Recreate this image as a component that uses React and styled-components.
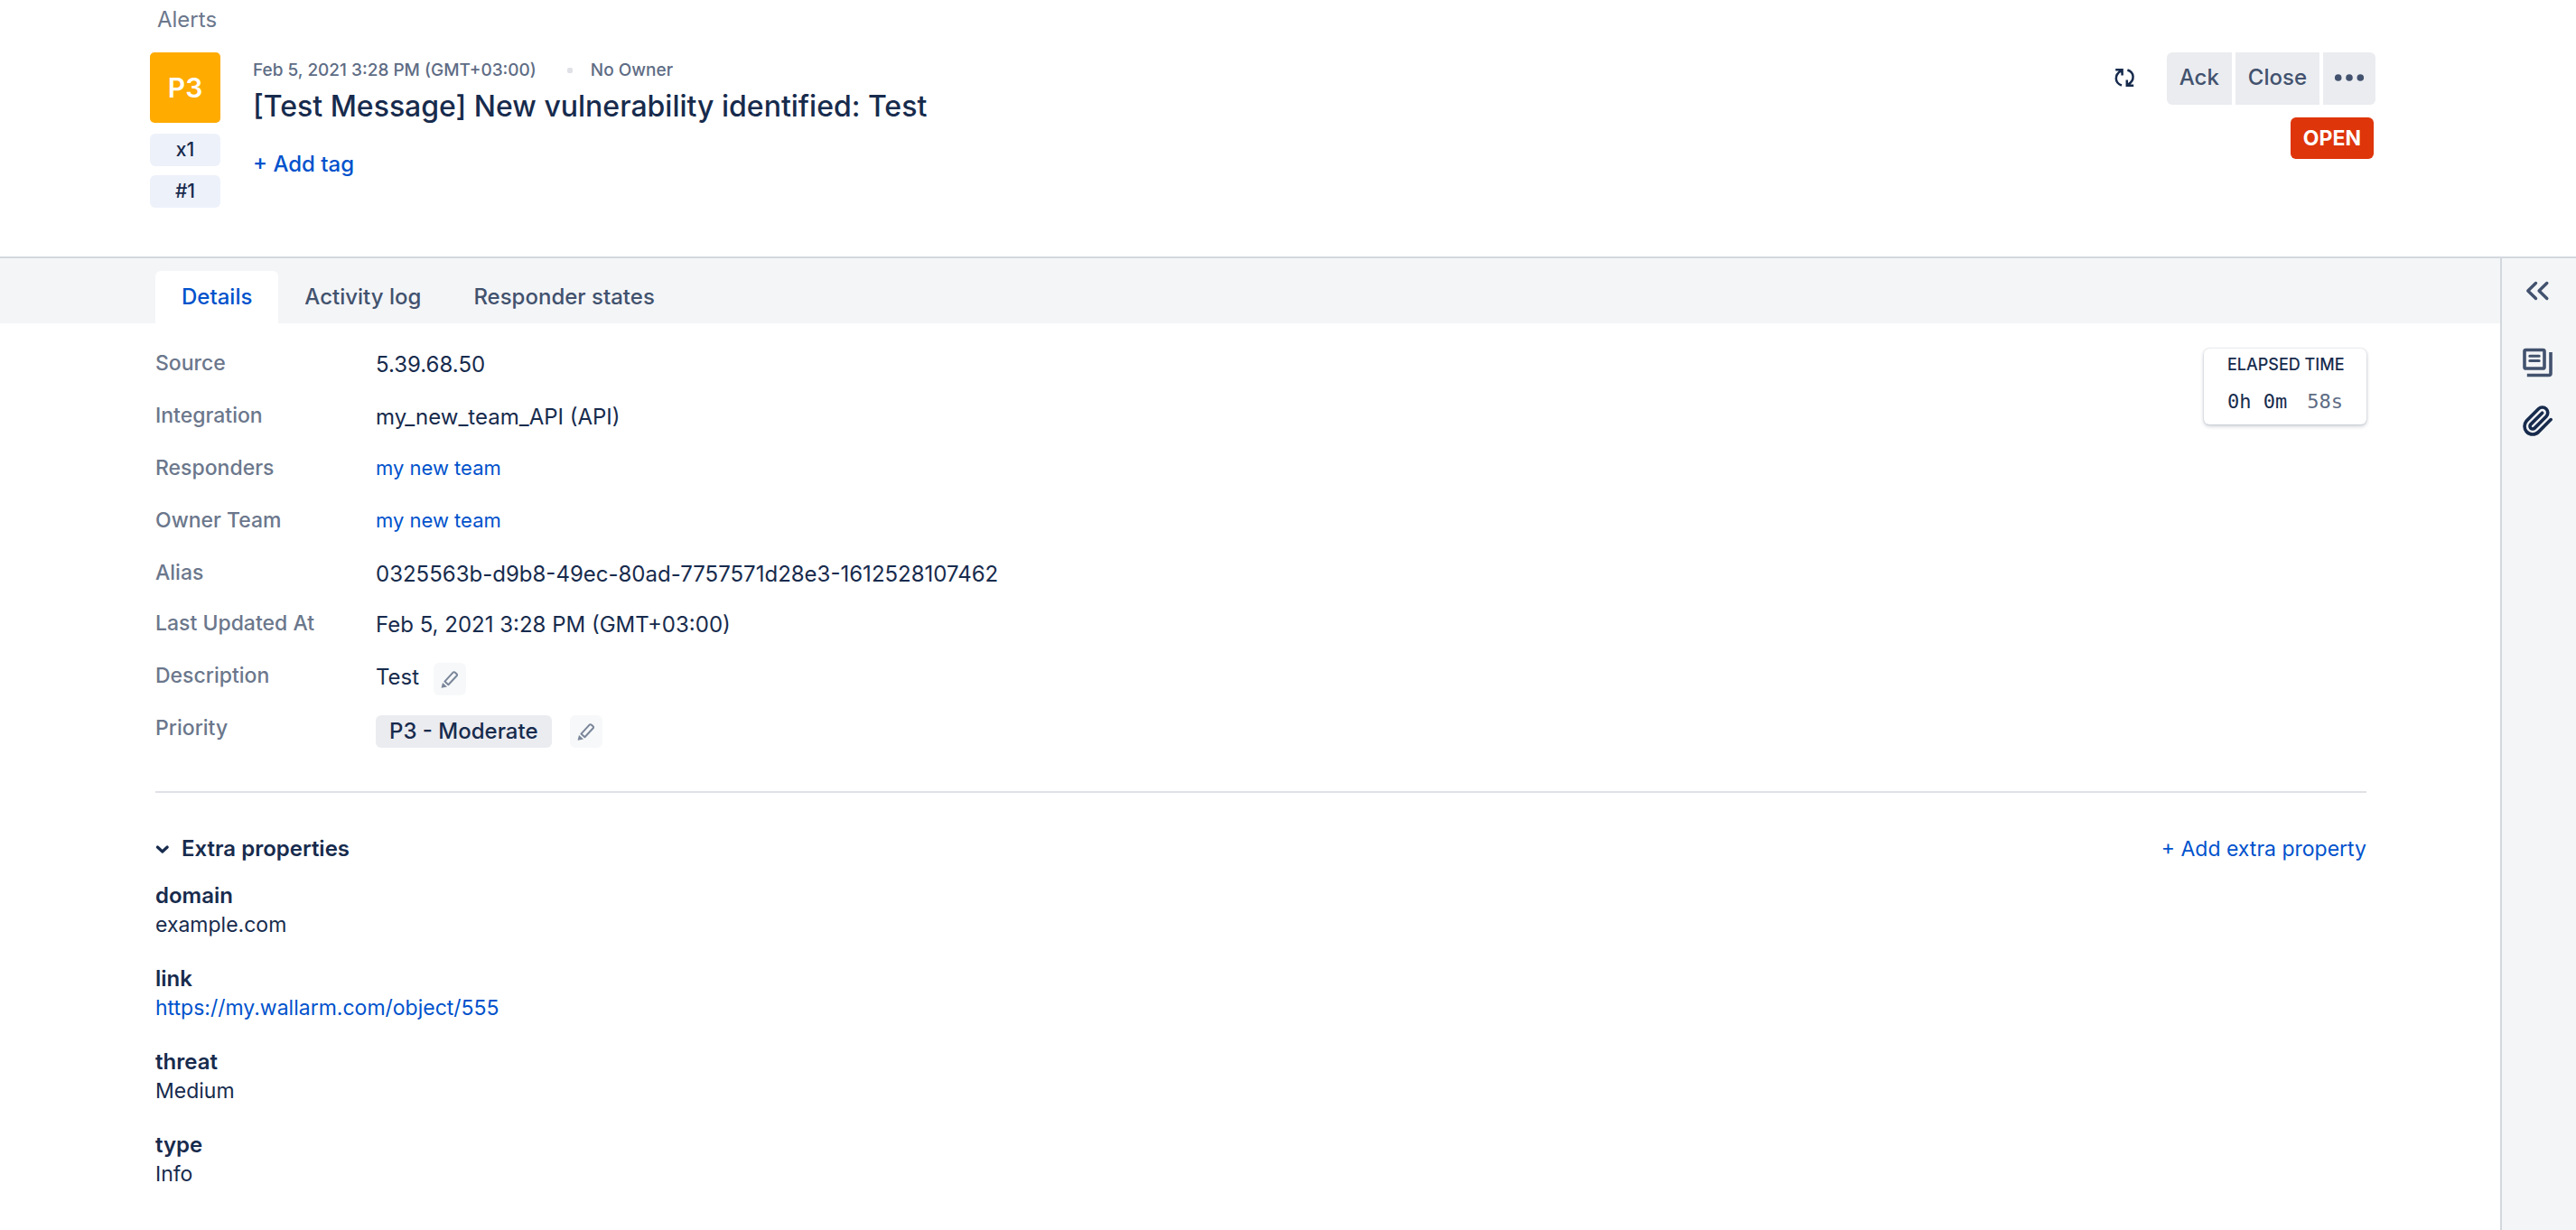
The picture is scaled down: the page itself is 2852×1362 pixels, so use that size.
import React from "react";
import styled, { createGlobalStyle, css } from "styled-components";

const color = {
  text: "#172b4d",
  subtle: "#42526e",
  meta: "#5e6c84",
  label: "#6b778c",
  link: "#0052cc",
  surface: "#f4f5f7",
  neutral: "#ebecf0",
  line: "#d3d8de",
  divider: "#dfe1e6",
  badge: "#edf1fa",
  amber: "#ffab00",
  red: "#de350b",
};

const GlobalStyle = createGlobalStyle`
  *, *::before, *::after { box-sizing: border-box; }
  body {
    margin: 0;
    background: #fff;
    color: ${color.text};
    font-family: Inter, "Liberation Sans", sans-serif;
    font-size: 24px;
    line-height: 32px;
  }
  h1, h2, dl, dd { margin: 0; }
  svg { display: block; }
`;

const Page = styled.div`
  display: flex;
  flex-direction: column;
  min-height: 100vh;
`;

const buttonReset = css`
  margin: 0;
  padding: 0;
  border: 0;
  background: none;
  color: inherit;
  font: inherit;
  cursor: pointer;
`;

/* ---------- Header ---------- */

const Header = styled.header`
  padding: 6px 222px 54px 166px;
  border-bottom: 2px solid ${color.line};
`;

const Breadcrumb = styled.a`
  display: block;
  width: max-content;
  margin: 0 0 20px 8px;
  color: ${color.label};
  text-decoration: none;
`;

const HeaderRow = styled.div`
  display: flex;
  align-items: flex-start;
  gap: 36px;
`;

const Badges = styled.div`
  display: flex;
  flex-direction: column;
  flex: none;
  gap: 10px;
  width: 78px;
`;

const PriorityBadge = styled.div`
  display: grid;
  place-items: center;
  height: 78px;
  margin-bottom: 2px;
  border-radius: 5px;
  background: ${color.amber};
  color: #fff;
  font-size: 30px;
  font-weight: 600;
`;

const CountBadge = styled.div`
  display: grid;
  place-items: center;
  height: 36px;
  border-radius: 6px;
  background: ${color.badge};
  font-size: 21px;
  font-weight: 500;
`;

const Summary = styled.div`
  flex: 1;
  padding-top: 6px;
`;

const Meta = styled.div`
  display: flex;
  align-items: center;
  color: ${color.meta};
  font-size: 19px;
  font-weight: 500;
  line-height: 28px;
`;

const Dot = styled.span`
  width: 6px;
  height: 6px;
  margin: 0 20px 0 34px;
  border-radius: 2px;
  background: ${color.divider};
`;

const Title = styled.h1`
  margin: 6px 0 28px;
  font-size: 32px;
  font-weight: 500;
  line-height: 40px;
`;

const TextButton = styled.button`
  ${buttonReset}
  display: block;
  color: ${color.link};
  font-size: ${(p) => (p.$strong ? "24px" : "23px")};
  font-weight: ${(p) => (p.$strong ? 500 : 400)};
`;

const HeaderSide = styled.div`
  display: flex;
  flex-direction: column;
  align-items: flex-end;
  gap: 14px;
`;

const Actions = styled.div`
  display: flex;
  align-items: center;
  gap: 18px;
`;

const ButtonGroup = styled.div`
  display: flex;
  gap: 4px;
  border-radius: 6px;
  overflow: hidden;
`;

const ActionButton = styled.button`
  ${buttonReset}
  height: 58px;
  padding: 0 14px 2px;
  background: ${color.neutral};
  color: ${color.subtle};
  font-weight: 500;
`;

const IconButton = styled.button`
  ${buttonReset}
  display: grid;
  place-items: center;
  width: 58px;
  height: 58px;
  padding-bottom: 2px;
  background: ${(p) => (p.$filled ? color.neutral : "none")};
  color: ${(p) => (p.$filled ? color.subtle : color.text)};
`;

const Status = styled.span`
  margin-right: 2px;
  padding: 7px 14px;
  border-radius: 6px;
  background: ${color.red};
  color: #fff;
  font-size: 23px;
  font-weight: 700;
`;

/* ---------- Body ---------- */

const Body = styled.div`
  display: flex;
  flex: 1;
`;

const Main = styled.main`
  flex: 1;
  min-width: 0;
`;

const Tabs = styled.div`
  display: flex;
  padding: 14px 172px 0;
  background: ${color.surface};
`;

const Tab = styled.button`
  ${buttonReset}
  height: 58px;
  padding: 0 29px;
  border-radius: 6px 6px 0 0;
  background: ${(p) => (p["aria-selected"] ? "#fff" : "none")};
  color: ${(p) => (p["aria-selected"] ? color.link : color.subtle)};
  font-weight: 500;
`;

const Panel = styled.div`
  padding: 28px 148px 24px 172px;
`;

const Overview = styled.section`
  display: flex;
  justify-content: space-between;
  align-items: flex-start;
  padding-bottom: 28px;
  border-bottom: 2px solid ${color.divider};
`;

const Fields = styled.dl`
  flex: 1;
`;

const Field = styled.div`
  display: grid;
  grid-template-columns: 244px 1fr;
  align-items: start;
  height: ${(p) => (p.$tight ? "56px" : "58px")};
`;

const FieldName = styled.dt`
  color: ${color.label};
  font-size: 23px;
  font-weight: 500;
`;

const FieldValue = styled.dd`
  display: flex;
  align-items: flex-start;
  gap: ${(p) => p.$gap || "16px"};
  padding-top: 2px;
`;

const TeamLink = styled.a`
  color: ${color.link};
  font-size: 22px;
  line-height: 28px;
  text-decoration: none;
`;

const Lozenge = styled.span`
  padding: 2px 15px;
  border-radius: 6px;
  background: ${color.neutral};
  font-weight: 500;
`;

const EditButton = styled.button`
  ${buttonReset}
  display: grid;
  place-items: center;
  width: 36px;
  height: 36px;
  border-radius: 6px;
  background: #f7f8f9;
  color: #7a869a;
`;

const Elapsed = styled.aside`
  width: 180px;
  padding: 6px 0 9px 26px;
  border-radius: 6px;
  box-shadow: 0 2px 4px rgba(9, 30, 66, 0.22), 0 0 2px rgba(9, 30, 66, 0.2);
`;

const ElapsedTitle = styled.div`
  margin-bottom: 13px;
  font-size: 18px;
  font-weight: 500;
  line-height: 24px;
`;

const ElapsedTime = styled.div`
  display: flex;
  gap: 22px;
  font-family: "DejaVu Sans Mono", "Liberation Mono", monospace;
  font-size: 22px;
`;

const Seconds = styled.span`
  color: ${color.meta};
`;

const SectionHead = styled.div`
  display: flex;
  justify-content: space-between;
  margin: 46px 0 20px;
`;

const SectionTitle = styled.h2`
  font-size: 24px;
  font-weight: 600;
`;

const Toggle = styled.button`
  ${buttonReset}
  display: flex;
  align-items: center;
  gap: 13px;
`;

const Properties = styled.dl`
  display: grid;
  gap: 28px;
`;

const PropertyName = styled.dt`
  font-weight: 600;
`;

const PropertyValue = styled.dd`
  font-size: 23px;
`;

const ExternalLink = styled.a`
  color: ${color.link};
  text-decoration: none;
`;

const Sidebar = styled.aside`
  display: flex;
  flex-direction: column;
  align-items: center;
  flex: none;
  gap: 24px;
  width: 84px;
  padding: 16px 2px 0 0;
  border-left: 2px solid ${color.line};
  background: ${color.surface};
`;

const SideButton = styled.button`
  ${buttonReset}
  display: grid;
  place-items: center;
  width: 40px;
  height: 40px;
  margin-bottom: ${(p) => (p.$apart ? "16px" : 0)};
  color: ${(p) => (p.$dark ? color.text : color.subtle)};
`;

/* ---------- Icons ---------- */

const RefreshIcon = () => (
  <svg width="24" height="24" viewBox="0 0 24 24" fill="none" stroke="currentColor" strokeWidth="2.5">
    <path d="M9 20.5C1.2 18 .6 9 8.3 4.4M2.2 3.2h7.4v6.2" />
    <path d="M15.4 3.5c7.8 2.5 8.4 11.5.7 16.1M22.2 20.8h-7.4v-6.2" />
    <path d="M5 3h5v5zM19.4 21h-5v-5z" fill="currentColor" stroke="none" />
  </svg>
);

const MoreIcon = () => (
  <svg width="34" height="10" viewBox="0 0 34 10" fill="currentColor">
    <circle cx="4.7" cy="5" r="3.8" />
    <circle cx="17" cy="5" r="3.8" />
    <circle cx="29.3" cy="5" r="3.8" />
  </svg>
);

const PencilIcon = () => (
  <svg width="20" height="20" viewBox="0 0 20 20" fill="none" stroke="currentColor" strokeWidth="2">
    <path d="M13.6 2.6a1.4 1.4 0 0 1 2-.1l2 1.8a1.4 1.4 0 0 1 .1 2L8.4 16.2 4.4 12.6z" strokeLinejoin="round" />
    <path d="M2 14l5 4.5-6.4 1.3z" fill="currentColor" stroke="none" />
  </svg>
);

const ChevronDownIcon = () => (
  <svg width="16" height="12" viewBox="0 0 16 12" fill="none" stroke="currentColor" strokeWidth="3.2" strokeLinecap="round" strokeLinejoin="round">
    <path d="M2.4 4l5.4 5 5.4-5" />
  </svg>
);

const CollapseIcon = () => (
  <svg width="28" height="24" viewBox="0 0 28 24" fill="none" stroke="currentColor" strokeWidth="3.4" strokeLinecap="round" strokeLinejoin="round">
    <path d="M11.5 3.5L2.8 12l8.7 8.500M23.8 3.500L15.1 12l8.7 8.500" />
  </svg>
);

const NotesIcon = () => (
  <svg width="34" height="34" viewBox="0 0 34 34" fill="none" stroke="currentColor" strokeWidth="3.6" strokeLinecap="round">
    <rect x="2" y="2.5" width="22" height="20.5" rx="1.6" />
    <path d="M7.8 9.2h10.4M7.8 14.6h10.4" strokeWidth="3" />
    <path d="M31 5v23.5a2 2 0 0 1-2 2H4.8" strokeLinecap="butt" />
  </svg>
);

const AttachmentIcon = () => (
  <svg width="36" height="36" viewBox="0 0 24 24" fill="none" stroke="currentColor" strokeWidth="2.4" strokeLinecap="round">
    <path d="m21.44 11.05-9.19 9.19a6 6 0 0 1-8.49-8.49l8.57-8.57A4 4 0 1 1 18 8.84l-8.59 8.57a2 2 0 0 1-2.83-2.83l8.49-8.48" />
  </svg>
);

/* ---------- Data ---------- */

const tabs = ["Details", "Activity log", "Responder states"];

const fields = [
  { name: "Source", value: "5.39.68.50" },
  { name: "Integration", value: "my_new_team_API (API)" },
  { name: "Responders", value: "my new team", link: true },
  { name: "Owner Team", value: "my new team", link: true },
  { name: "Alias", value: "0325563b-d9b8-49ec-80ad-7757571d28e3-1612528107462", tight: true },
  { name: "Last Updated At", value: "Feb 5, 2021 3:28 PM (GMT+03:00)" },
  { name: "Description", value: "Test", editable: true },
  { name: "Priority", value: "P3 - Moderate", lozenge: true, editable: true },
];

const properties = [
  { name: "domain", value: "example.com" },
  { name: "link", value: "https://my.wallarm.com/object/555", link: true },
  { name: "threat", value: "Medium" },
  { name: "type", value: "Info" },
];

function Value({ field }) {
  if (field.link) return <TeamLink href="#team">{field.value}</TeamLink>;
  if (field.lozenge) return <Lozenge>{field.value}</Lozenge>;
  return <span>{field.value}</span>;
}

export default function App() {
  return (
    <Page>
      <GlobalStyle />
      <Header>
        <Breadcrumb href="#alerts">Alerts</Breadcrumb>
        <HeaderRow>
          <Badges>
            <PriorityBadge>P3</PriorityBadge>
            <CountBadge>x1</CountBadge>
            <CountBadge>#1</CountBadge>
          </Badges>
          <Summary>
            <Meta>
              <span>Feb 5, 2021 3:28 PM (GMT+03:00)</span>
              <Dot />
              <span>No Owner</span>
            </Meta>
            <Title>[Test Message] New vulnerability identified: Test</Title>
            <TextButton type="button" $strong>+ Add tag</TextButton>
          </Summary>
          <HeaderSide>
            <Actions>
              <IconButton type="button" aria-label="Refresh"><RefreshIcon /></IconButton>
              <ButtonGroup>
                <ActionButton type="button">Ack</ActionButton>
                <ActionButton type="button">Close</ActionButton>
                <IconButton type="button" $filled aria-label="More actions"><MoreIcon /></IconButton>
              </ButtonGroup>
            </Actions>
            <Status>OPEN</Status>
          </HeaderSide>
        </HeaderRow>
      </Header>

      <Body>
        <Main>
          <Tabs role="tablist">
            {tabs.map((tab, i) => (
              <Tab key={tab} type="button" role="tab" aria-selected={i === 0}>{tab}</Tab>
            ))}
          </Tabs>
          <Panel role="tabpanel">
            <Overview>
              <Fields>
                {fields.map((field) => (
                  <Field key={field.name} $tight={field.tight}>
                    <FieldName>{field.name}</FieldName>
                    <FieldValue $gap={field.lozenge && "20px"}>
                      <Value field={field} />
                      {field.editable && (
                        <EditButton type="button" aria-label={`Edit ${field.name}`}><PencilIcon /></EditButton>
                      )}
                    </FieldValue>
                  </Field>
                ))}
              </Fields>
              <Elapsed>
                <ElapsedTitle>ELAPSED TIME</ElapsedTitle>
                <ElapsedTime>
                  <span>0h 0m</span>
                  <Seconds>58s</Seconds>
                </ElapsedTime>
              </Elapsed>
            </Overview>

            <section>
              <SectionHead>
                <SectionTitle>
                  <Toggle type="button" aria-expanded="true">
                    <ChevronDownIcon />
                    Extra properties
                  </Toggle>
                </SectionTitle>
                <TextButton type="button">+ Add extra property</TextButton>
              </SectionHead>
              <Properties>
                {properties.map((item) => (
                  <div key={item.name}>
                    <PropertyName>{item.name}</PropertyName>
                    <PropertyValue>
                      {item.link ? <ExternalLink href="#object">{item.value}</ExternalLink> : item.value}
                    </PropertyValue>
                  </div>
                ))}
              </Properties>
            </section>
          </Panel>
        </Main>

        <Sidebar>
          <SideButton type="button" $apart aria-label="Expand sidebar"><CollapseIcon /></SideButton>
          <SideButton type="button" aria-label="Notes"><NotesIcon /></SideButton>
          <SideButton type="button" $dark aria-label="Attachments"><AttachmentIcon /></SideButton>
        </Sidebar>
      </Body>
    </Page>
  );
}
